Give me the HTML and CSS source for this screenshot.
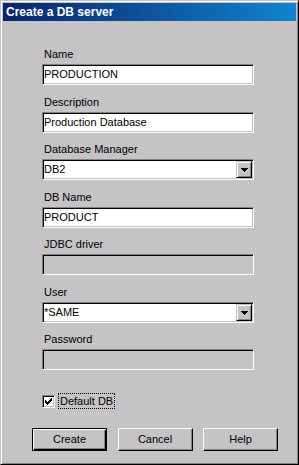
FILE: index.html
```html
<!DOCTYPE html>
<html>
<head>
<meta charset="utf-8">
<title>Create a DB server</title>
<link rel="stylesheet" href="styles.css">
</head>
<body>
<div class="window">
  <div class="titlebar">Create a DB server</div>
  <div class="client">
    <div class="fields">
      <div class="field">
        <div class="label">Name</div>
        <div class="edit">PRODUCTION</div>
      </div>
      <div class="field">
        <div class="label">Description</div>
        <div class="edit">Production Database</div>
      </div>
      <div class="field">
        <div class="label">Database Manager</div>
        <div class="edit combo">
          <span class="combo-text">DB2</span>
          <span class="combo-btn"><svg width="7" height="4" viewBox="0 0 7 4" shape-rendering="crispEdges"><path d="M0 0h7v1H0zM1 1h5v1H1zM2 2h3v1H2zM3 3h1v1H3z" fill="#000"/></svg></span>
        </div>
      </div>
      <div class="field">
        <div class="label">DB Name</div>
        <div class="edit">PRODUCT</div>
      </div>
      <div class="field">
        <div class="label">JDBC driver</div>
        <div class="edit disabled"></div>
      </div>
      <div class="field">
        <div class="label">User</div>
        <div class="edit combo">
          <span class="combo-text">*SAME</span>
          <span class="combo-btn"><svg width="7" height="4" viewBox="0 0 7 4" shape-rendering="crispEdges"><path d="M0 0h7v1H0zM1 1h5v1H1zM2 2h3v1H2zM3 3h1v1H3z" fill="#000"/></svg></span>
        </div>
      </div>
      <div class="field">
        <div class="label">Password</div>
        <div class="edit disabled"></div>
      </div>
    </div>
    <div class="check-row">
      <span class="checkbox"><svg width="7" height="7" viewBox="0 0 7 7" shape-rendering="crispEdges"><path d="M0 2h1v3H0zM1 3h1v3H1zM2 4h1v3H2zM3 3h1v3H3zM4 2h1v3H4zM5 1h1v3H5zM6 0h1v3H6z" fill="#000"/></svg></span>
      <span class="check-label">Default DB</span>
    </div>
    <div class="buttons">
      <div class="button default">Create</div>
      <div class="button">Cancel</div>
      <div class="button">Help</div>
    </div>
  </div>
</div>
</body>
</html>
```

FILE: styles.css
```css
html, body {
  margin: 0;
  padding: 0;
  background: #c6c3c6;
}

body {
  font-family: "Liberation Sans", Arial, sans-serif;
  font-size: 11px;
  color: #000;
}

.window {
  width: 299px;
  height: 465px;
  box-sizing: border-box;
  border: 1px solid;
  border-color: #c6c3c6 #000 #000 #c6c3c6;
  box-shadow: inset 1px 1px #fff, inset -1px -1px #848284;
  padding: 2px;
  background: #c6c3c6;
}

.titlebar {
  height: 18px;
  line-height: 18px;
  padding-left: 3px;
  background: linear-gradient(to right, #0a246a, #1084d0);
  color: #fff;
  font-weight: bold;
  font-size: 12px;
  white-space: nowrap;
}

.client {
  padding: 27px 0 0 29px;
}

.fields {
  display: grid;
  grid-auto-rows: 47.5px;
  width: 212px;
  margin-left: 10px;
}

.label {
  height: 13px;
  line-height: 13px;
  padding-left: 2px;
  white-space: nowrap;
}

.edit {
  margin-top: 3px;
  height: 21px;
  box-sizing: border-box;
  border: 1px solid;
  border-color: #848284 #fff #fff #848284;
  box-shadow: inset 1px 1px #000, inset -1px -1px #c6c3c6;
  background: #fff;
  line-height: 19px;
  padding-left: 1px;
  white-space: nowrap;
  overflow: hidden;
}

.edit.disabled {
  background: #c6c3c6;
}

.combo {
  display: flex;
  align-items: stretch;
  padding: 1px 1px 1px 1px;
  line-height: 17px;
}

.combo-text {
  flex: 1;
}

.combo-btn {
  width: 16px;
  height: 17px;
  box-sizing: border-box;
  border: 1px solid;
  border-color: #c6c3c6 #000 #000 #c6c3c6;
  box-shadow: inset 1px 1px #fff, inset -1px -1px #848284;
  background: #c6c3c6;
  display: flex;
  align-items: center;
  justify-content: center;
}

.combo-btn svg {
  display: block;
  margin-top: 1px;
}

.check-row {
  margin: 12.5px 0 0 10px;
  height: 16px;
  display: flex;
  align-items: center;
}

.checkbox {
  width: 13px;
  height: 13px;
  box-sizing: border-box;
  border: 1px solid;
  border-color: #848284 #fff #fff #848284;
  box-shadow: inset 1px 1px #000, inset -1px -1px #c6c3c6;
  background: #fff;
  display: flex;
  align-items: center;
  justify-content: center;
}

.checkbox svg {
  display: block;
}

.check-label {
  margin-left: 3px;
  border: 1px dotted #000;
  padding: 0 1px;
  line-height: 14px;
  white-space: nowrap;
}

.buttons {
  margin-top: 19px;
  display: flex;
  gap: 10.5px;
}

.button {
  width: 75px;
  height: 23px;
  box-sizing: border-box;
  border: 1px solid;
  border-color: #fff #000 #000 #fff;
  box-shadow: inset -1px -1px #848284;
  background: #c6c3c6;
  text-align: center;
  line-height: 21px;
}

.button.default {
  border-color: #000;
  box-shadow: inset 1px 1px #fff, inset -1px -1px #000, inset -2px -2px #848284;
}
```
